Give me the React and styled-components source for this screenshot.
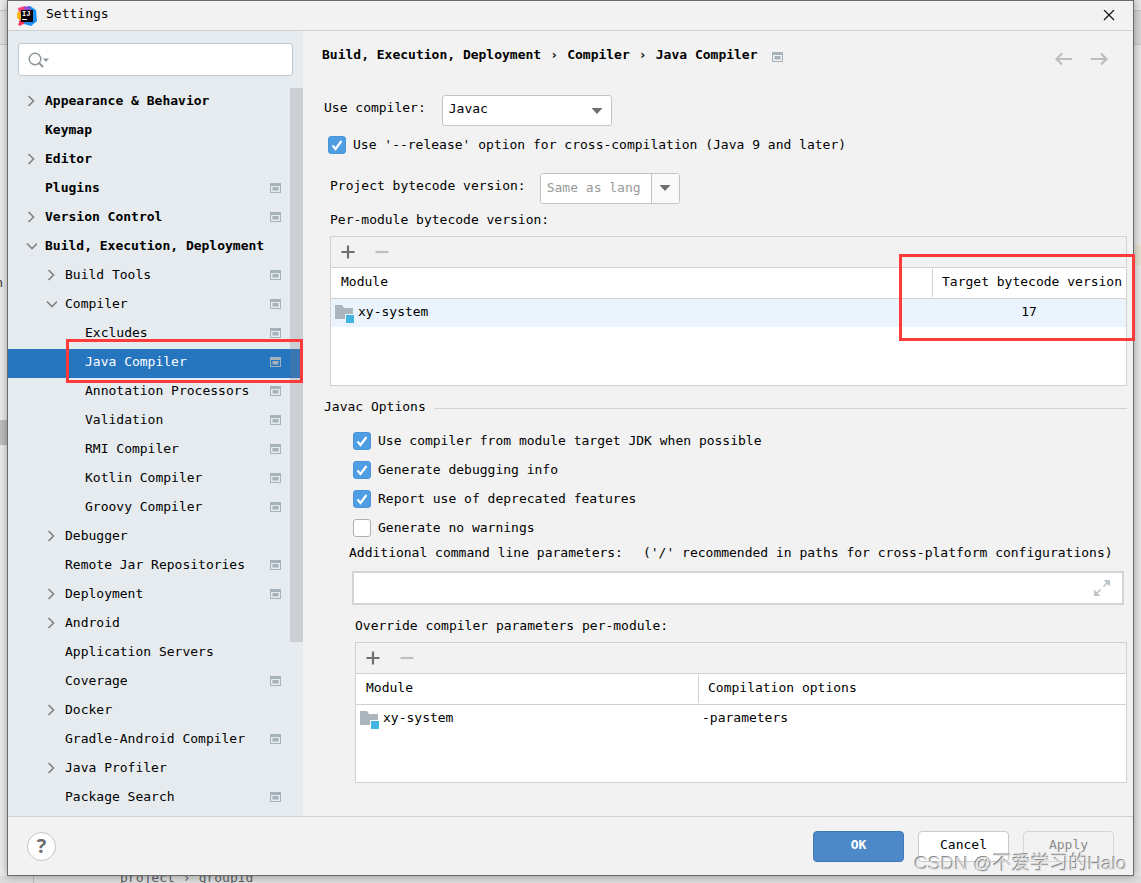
import React, { useState } from 'react';
import styled, { createGlobalStyle } from 'styled-components';

const GlobalStyle = createGlobalStyle`
  * {
    box-sizing: border-box;
  }

  body {
    margin: 0;
    background: #ebebeb;
  }

  body, button, input, select {
    font-family: 'DejaVu Sans Mono', 'Liberation Mono', monospace;
    font-size: 13px;
    line-height: 20px;
    color: #000;
  }
`;

/* ---------- editor behind the dialog ---------- */

const Desktop = styled.div`
  display: grid;
  grid-template-columns: 7px minmax(0, 1fr) 7px;
  grid-template-rows: 1fr 7px;
  min-height: 100vh;
`;

const Edge = styled.div`
  display: flex;
  flex-direction: column;
  overflow: hidden;
  background: ${(props) => props.$color};
`;

const EdgeBlock = styled.div`
  flex: none;
  height: ${(props) => props.$height}px;
  background: ${(props) => props.$color || 'transparent'};
  border-bottom: ${(props) => (props.$line ? '1px solid #c6c6c6' : 'none')};
`;

const EdgeText = styled.div`
  flex: none;
  align-self: flex-end;
  padding-right: 4px;
  color: #333;
`;

const StatusBar = styled.div`
  grid-column: 1 / -1;
  display: flex;
  height: 7px;
  overflow: hidden;
  padding-left: 33px;
  background: #dcdcdc;
`;

const StatusPath = styled.div`
  flex: 1;
  display: flex;
  gap: 8px;
  align-items: flex-end;
  border-left: 1px solid #bcbcbc;
  padding-left: 86px;
  color: #5c6066;
  line-height: 10px;
`;

/* ---------- dialog frame ---------- */

const Dialog = styled.div`
  position: relative;
  display: flex;
  flex-direction: column;
  background: #f2f2f2;
  border: 1px solid #6b6b6b;
  box-shadow: 0 0 8px rgba(0, 0, 0, 0.35);
`;

const TitleBar = styled.header`
  display: flex;
  align-items: center;
  gap: 9px;
  height: 30px;
  padding: 0 18px 0 9px;
  border-bottom: 1px solid #d1d1d1;
`;

const Title = styled.h1`
  flex: 1;
  margin: 0;
  padding-bottom: 4px;
  font-size: 13px;
  font-weight: normal;
`;

const IconButton = styled.button`
  display: flex;
  padding: 0;
  border: none;
  background: none;
  cursor: pointer;
`;

const Content = styled.div`
  flex: 1;
  display: flex;
`;

/* ---------- sidebar ---------- */

const Sidebar = styled.aside`
  flex: none;
  width: 295px;
  background: #e6ebef;
`;

const SearchBox = styled.label`
  display: flex;
  align-items: center;
  gap: 4px;
  height: 33px;
  margin: 12px 10px;
  padding: 0 9px;
  background: #fff;
  border: 1px solid #c4c8cb;
  border-radius: 3px;
`;

const SearchInput = styled.input`
  flex: 1;
  min-width: 0;
  border: none;
  outline: none;
  background: none;
`;

const TreeArea = styled.nav`
  position: relative;
  padding-bottom: 3px;
`;

const Tree = styled.ul`
  margin: 0;
  padding: 0;
  list-style: none;
`;

const TreeRow = styled.li`
  position: relative;
  display: flex;
  align-items: center;
  height: 29px;
  padding: 0 22px 4px ${(props) => 17 + props.$level * 20}px;
  background: ${(props) => (props.$selected ? '#2675bf' : 'transparent')};
  color: ${(props) => (props.$selected ? '#fff' : '#000')};
  font-weight: ${(props) => (props.$level === 0 ? 'bold' : 'normal')};
  white-space: nowrap;
`;

const Twisty = styled.span`
  flex: none;
  display: flex;
  width: 20px;
`;

const TreeLabel = styled.span`
  flex: 1;
`;

const ScrollThumb = styled.div`
  position: absolute;
  top: 0;
  right: 0;
  width: 13px;
  height: 554px;
  background: rgba(120, 120, 125, 0.24);
`;

const Highlight = styled.div`
  position: absolute;
  border: 3px solid #fc3b3a;
  pointer-events: none;
  z-index: 2;
`;

const RowHighlight = styled(Highlight)`
  top: -10px;
  right: 0;
  bottom: -5px;
  left: 58px;
`;

const ColumnHighlight = styled(Highlight)`
  top: 17px;
  right: -9px;
  width: 236px;
  height: 87px;
`;

/* ---------- settings page ---------- */

const Main = styled.main`
  flex: 1;
  min-width: 0;
  padding: 0 6px 33px 19px;
`;

const PageHeader = styled.div`
  display: flex;
  align-items: center;
  justify-content: space-between;
  height: 48px;
  padding-right: 19px;
`;

const Breadcrumb = styled.h2`
  display: flex;
  align-items: center;
  gap: 9px;
  margin: 0;
  font-size: 13px;

  svg {
    margin: 4px 0 0 5px;
  }
`;

const Separator = styled.span`
  width: 8px;
`;

const HistoryButtons = styled.div`
  display: flex;
  gap: 17px;
  padding-top: 8px;
`;

const Field = styled.div`
  display: flex;
  align-items: center;
  height: 30px;
  margin: ${(props) => props.$margin};
`;

const FieldLabel = styled.label`
  padding: 0 ${(props) => props.$gap}px 4px 0;
`;

const SelectBox = styled.div`
  display: grid;
  align-items: center;
  width: 170px;
  background: #fff;
  border: 1px solid #c4c4c4;
  border-radius: 3px;

  select, svg {
    grid-area: 1 / 1;
  }

  select {
    height: 29px;
    padding: 0 6px 2px;
    border: none;
    outline: none;
    background: transparent;
    appearance: none;
  }

  svg {
    justify-self: end;
    margin: 2px 8px 0 0;
    pointer-events: none;
  }
`;

const ComboBox = styled.div`
  display: flex;
  width: 140px;
  height: 31px;
  background: #fff;
  border: 1px solid #c4c4c4;
  border-radius: 3px;
  overflow: hidden;

  input {
    width: 111px;
    padding: 0 6px;
    border: none;
    border-right: 1px solid #c4c4c4;
    outline: none;
  }

  input::placeholder {
    color: #999;
    opacity: 1;
  }

  button {
    flex: 1;
    display: flex;
    align-items: center;
    justify-content: center;
    padding: 0;
    border: none;
    background: #fafafa;
  }
`;

const CheckRow = styled.label`
  display: flex;
  align-items: center;
  gap: 7px;
  height: 29px;
  margin: ${(props) => props.$margin || 0};
`;

const Checkbox = styled.input`
  width: 18px;
  height: 18px;
  margin: 0;
  appearance: none;
  border: 1px solid #b0b0b0;
  border-radius: 3px;
  background: #fff;

  &:checked {
    border-color: #4a94db;
    background: #4f9ee3
      url("data:image/svg+xml,%3Csvg xmlns='http://www.w3.org/2000/svg' viewBox='0 0 16 16'%3E%3Cpath d='M3.5 8.5L6.5 12L12.5 4' fill='none' stroke='white' stroke-width='2.2'/%3E%3C/svg%3E")
      center / 16px no-repeat;
  }
`;

const Caption = styled.div`
  margin: ${(props) => props.$margin};
`;

const SectionTitle = styled.h3`
  display: flex;
  align-items: center;
  gap: 8px;
  margin: 11px 0 9px 2px;
  font-size: 13px;
  font-weight: normal;

  &::after {
    content: '';
    flex: 1;
    height: 1px;
    margin-top: 3px;
    background: #d1d1d1;
  }
`;

const OptionList = styled.div`
  padding-left: 31px;
`;

const ParamLabels = styled.div`
  display: flex;
  gap: 20px;
  padding: 1px 0 0 27px;
  white-space: nowrap;
`;

const ParamBox = styled.div`
  display: flex;
  align-items: center;
  height: 34px;
  margin: 8px 3px 11px 30px;
  padding: 0 12px 0 6px;
  background: #fff;
  border: 2px solid #d4d4d4;

  input {
    flex: 1;
    min-width: 0;
    border: none;
    outline: none;
  }
`;

const TablePanel = styled.section`
  position: relative;
  height: ${(props) => props.$height}px;
  margin: 6px 0 0 ${(props) => props.$indent}px;
  background: #fff;
  border: 1px solid #d1d1d1;
`;

const Toolbar = styled.div`
  display: flex;
  align-items: center;
  gap: 18px;
  height: 31px;
  padding-left: 9px;
  background: #f2f2f2;
  border-bottom: 1px solid #d1d1d1;
`;

const Table = styled.table`
  width: 100%;
  table-layout: fixed;
  border-collapse: separate;
  border-spacing: 0;

  th {
    height: 31px;
    padding: 0;
    border-bottom: 1px solid #d1d1d1;
    font-weight: normal;
    text-align: left;
    white-space: nowrap;
    overflow: hidden;
  }

  td {
    height: 28px;
    padding: 0 4px 3px;
  }
`;

const HeadCell = styled.div`
  height: 28px;
  padding: 3px 0 0 9px;
  border-left: 1px solid ${(props) => (props.$divider ? '#d1d1d1' : 'transparent')};
`;

const BodyRow = styled.tr`
  background: ${(props) => (props.$active ? '#ebf4fc' : '#fff')};
`;

const Column = styled.col`
  width: ${(props) => props.$width};
`;

const ModuleName = styled.div`
  display: flex;
  align-items: center;
  gap: 3px;

  svg {
    margin-top: 4px;
  }
`;

const ValueCell = styled.td`
  text-align: ${(props) => props.$align};
`;

/* ---------- footer ---------- */

const Footer = styled.footer`
  display: flex;
  align-items: center;
  gap: 14px;
  height: 59px;
  padding: 0 19px;
  border-top: 1px solid #d1d1d1;
`;

const HelpButton = styled.button`
  width: 29px;
  height: 29px;
  margin-right: auto;
  padding: 0;
  border: 1px solid #c4c4c4;
  border-radius: 50%;
  background: #fff;
  color: #6e6e6e;
  font-family: 'Open Sans', sans-serif;
  font-size: 20px;
  font-weight: bold;
`;

const DialogButton = styled.button`
  width: 91px;
  height: 31px;
  padding: 0 0 3px;
  border: 1px solid ${(props) => (props.$primary ? '#3f78b8' : '#c9c9c9')};
  border-radius: 4px;
  background: ${(props) => (props.$primary ? '#4d89c9' : '#fff')};
  color: ${(props) => (props.$primary ? '#fff' : '#000')};
  font-weight: ${(props) => (props.$primary ? 'bold' : 'normal')};

  &:disabled {
    border-color: #d6d6d6;
    background: #f2f2f2;
    color: #8c8c8c;
  }
`;

const Watermark = styled.div`
  position: absolute;
  right: 6px;
  bottom: 0;
  font-family: 'Liberation Sans', 'Noto Sans CJK SC', sans-serif;
  font-size: 19px;
  line-height: 22px;
  color: rgba(225, 225, 225, 0.9);
  text-shadow: -1px -1px 0 #8a8a8a;
  white-space: nowrap;
  pointer-events: none;
`;

/* ---------- icons ---------- */

const AppLogo = () => (
  <svg width="20" height="20" viewBox="0 0 20 20">
    <path d="M1 2L8 0L11 5L8 16L4 19L1 19L3 14L0 11L2 7Z" fill="#fc3f78" />
    <path d="M0 7L3 5L5 12L3 14L0 12Z" fill="#fdb60d" />
    <path d="M2 15L6 13L9 17L2 20Z" fill="#fe315d" />
    <path d="M8 2L13 0L19 4L20 15L14 20L7 18L10 8Z" fill="#1a8ff5" />
    <path d="M7 1L12 0L15 5L8 6Z" fill="#8a4fd8" />
    <rect x="4" y="4" width="12" height="12" fill="#0b0307" />
    <text x="5" y="10" fill="#fff" fontFamily="Liberation Mono" fontSize="7" fontWeight="bold">IJ</text>
    <rect x="5" y="13" width="5" height="1" fill="#fff" />
  </svg>
);

const CloseIcon = () => (
  <svg width="12" height="12" viewBox="0 0 12 12" stroke="#111" strokeWidth="1.2">
    <path d="M1 0L11 10M11 0L1 10" />
  </svg>
);

const SearchIcon = () => (
  <svg width="21" height="16" viewBox="0 0 21 16" fill="none" stroke="#8c969c" strokeWidth="1.4">
    <circle cx="7" cy="7" r="5.8" />
    <path d="M11 11L15 15" strokeWidth="2" />
    <path d="M15 6.5H21L18 10Z" fill="#8c969c" stroke="none" />
  </svg>
);

const Chevron = ({ open }) => (
  <svg width="12" height="12" viewBox="0 0 12 12" fill="none" stroke="#808589" strokeWidth="1.7">
    <path d={open ? 'M2 3.5L7 8.5L12 3.5' : 'M3.5 1L8.5 6L3.5 11'} />
  </svg>
);

const ProjectScopeIcon = () => (
  <svg width="11" height="10" viewBox="0 0 11 10">
    <path d="M0 0H11V10H0ZM1 3V9H10V3Z" fill="#a6b2ba" fillRule="evenodd" />
    <rect x="2.5" y="4" width="6" height="3.5" fill="#a6b2ba" />
  </svg>
);

const ArrowIcon = ({ flip }) => (
  <svg width="18" height="14" viewBox="0 0 18 14" fill="none" stroke="#bdbdbd" strokeWidth="2.2">
    <path d={flip ? 'M1 7H16M11 1.5L16.5 7L11 12.5' : 'M17 7H2M7 1.5L1.5 7L7 12.5'} />
  </svg>
);

const DropIcon = () => (
  <svg width="12" height="6" viewBox="0 0 12 6" fill="#6e6e6e">
    <path d="M0.5 0H11.5L6 6Z" />
  </svg>
);

const AddIcon = () => (
  <svg width="16" height="16" viewBox="0 0 16 16" stroke="#6e6e6e" strokeWidth="2.2">
    <path d="M1.5 8H14.5M8 1.5V14.5" />
  </svg>
);

const RemoveIcon = () => (
  <svg width="16" height="16" viewBox="0 0 16 16" stroke="#bfbfbf" strokeWidth="2.2">
    <path d="M1.5 8H14.5" />
  </svg>
);

const ModuleIcon = () => (
  <svg width="20" height="19" viewBox="0 0 20 19">
    <path d="M0 1H7L9 4H18V10H10V15H0Z" fill="#aab5bc" />
    <rect x="11" y="11" width="8" height="8" fill="#40b6e0" />
  </svg>
);

const ExpandIcon = () => (
  <svg width="16" height="16" viewBox="0 0 16 16" fill="#bcc4c9">
    <path d="M9.5 0H16V6.5ZM6.5 16H0V9.5Z" />
    <path d="M14 2L9.5 6.5M2 14L6.5 9.5" stroke="#bcc4c9" strokeWidth="1.6" />
  </svg>
);

/* ---------- data ---------- */

const treeItems = [
  { label: 'Appearance & Behavior', level: 0, state: 'closed' },
  { label: 'Keymap', level: 0 },
  { label: 'Editor', level: 0, state: 'closed' },
  { label: 'Plugins', level: 0, project: true },
  { label: 'Version Control', level: 0, state: 'closed', project: true },
  { label: 'Build, Execution, Deployment', level: 0, state: 'open' },
  { label: 'Build Tools', level: 1, state: 'closed', project: true },
  { label: 'Compiler', level: 1, state: 'open', project: true },
  { label: 'Excludes', level: 2, project: true },
  { label: 'Java Compiler', level: 2, project: true, selected: true },
  { label: 'Annotation Processors', level: 2, project: true },
  { label: 'Validation', level: 2, project: true },
  { label: 'RMI Compiler', level: 2, project: true },
  { label: 'Kotlin Compiler', level: 2, project: true },
  { label: 'Groovy Compiler', level: 2, project: true },
  { label: 'Debugger', level: 1, state: 'closed' },
  { label: 'Remote Jar Repositories', level: 1, project: true },
  { label: 'Deployment', level: 1, state: 'closed', project: true },
  { label: 'Android', level: 1, state: 'closed' },
  { label: 'Application Servers', level: 1 },
  { label: 'Coverage', level: 1, project: true },
  { label: 'Docker', level: 1, state: 'closed' },
  { label: 'Gradle-Android Compiler', level: 1, project: true },
  { label: 'Java Profiler', level: 1, state: 'closed' },
  { label: 'Package Search', level: 1, project: true },
];

const javacOptions = [
  { id: 'targetJdk', label: 'Use compiler from module target JDK when possible' },
  { id: 'debugInfo', label: 'Generate debugging info' },
  { id: 'deprecated', label: 'Report use of deprecated features' },
  { id: 'noWarnings', label: 'Generate no warnings' },
];

const ModuleTable = ({ height, indent, column, width, value, align, active, children }) => (
  <TablePanel $height={height} $indent={indent}>
    <Toolbar>
      <IconButton type="button" aria-label="Add"><AddIcon /></IconButton>
      <IconButton type="button" aria-label="Remove"><RemoveIcon /></IconButton>
    </Toolbar>
    <Table>
      <colgroup>
        <Column />
        <Column $width={width} />
      </colgroup>
      <thead>
        <tr>
          <th><HeadCell>Module</HeadCell></th>
          <th><HeadCell $divider>{column}</HeadCell></th>
        </tr>
      </thead>
      <tbody>
        <BodyRow $active={active}>
          <td><ModuleName><ModuleIcon />xy-system</ModuleName></td>
          <ValueCell $align={align}>{value}</ValueCell>
        </BodyRow>
      </tbody>
    </Table>
    {children}
  </TablePanel>
);

const App = () => {
  const [query, setQuery] = useState('');
  const [params, setParams] = useState('');
  const [options, setOptions] = useState({
    release: true,
    targetJdk: true,
    debugInfo: true,
    deprecated: true,
    noWarnings: false,
  });

  const toggle = (id) => setOptions({ ...options, [id]: !options[id] });

  return (
    <Desktop>
      <GlobalStyle />
      <Edge $color="#ececec">
        <EdgeBlock $height={11} $line />
        <EdgeBlock $height={34} $color="#e2e2e2" $line />
        <EdgeBlock $height={228} />
        <EdgeText>n</EdgeText>
        <EdgeBlock $height={127} />
        <EdgeBlock $height={25} $color="#bdbdbd" />
      </Edge>

      <Dialog>
        <TitleBar>
          <AppLogo />
          <Title>Settings</Title>
          <IconButton type="button" aria-label="Close"><CloseIcon /></IconButton>
        </TitleBar>

        <Content>
          <Sidebar>
            <SearchBox>
              <SearchIcon />
              <SearchInput
                type="text"
                aria-label="Search settings"
                value={query}
                onChange={(e) => setQuery(e.target.value)}
              />
            </SearchBox>
            <TreeArea>
              <Tree>
                {treeItems.map((item) => (
                  <TreeRow key={item.label} $level={item.level} $selected={item.selected}>
                    <Twisty>{item.state && <Chevron open={item.state === 'open'} />}</Twisty>
                    <TreeLabel>{item.label}</TreeLabel>
                    {item.project && <ProjectScopeIcon />}
                    {item.selected && <RowHighlight />}
                  </TreeRow>
                ))}
              </Tree>
              <ScrollThumb />
            </TreeArea>
          </Sidebar>

          <Main>
            <PageHeader>
              <Breadcrumb>
                <span>Build, Execution, Deployment</span>
                <Separator>›</Separator>
                <span>Compiler</span>
                <Separator>›</Separator>
                <span>Java Compiler</span>
                <ProjectScopeIcon />
              </Breadcrumb>
              <HistoryButtons>
                <IconButton type="button" aria-label="Back"><ArrowIcon /></IconButton>
                <IconButton type="button" aria-label="Forward"><ArrowIcon flip /></IconButton>
              </HistoryButtons>
            </PageHeader>

            <Field $margin="16px 0 0 2px">
              <FieldLabel htmlFor="compiler" $gap={16}>Use compiler:</FieldLabel>
              <SelectBox>
                <select id="compiler" defaultValue="Javac">
                  <option>Javac</option>
                  <option>Eclipse</option>
                </select>
                <DropIcon />
              </SelectBox>
            </Field>

            <CheckRow $margin="5px 0 0 6px">
              <Checkbox type="checkbox" checked={options.release} onChange={() => toggle('release')} />
              Use '--release' option for cross-compilation (Java 9 and later)
            </CheckRow>

            <Field $margin="14px 0 0 8px">
              <FieldLabel htmlFor="bytecode" $gap={14}>Project bytecode version:</FieldLabel>
              <ComboBox>
                <input id="bytecode" type="text" placeholder="Same as lang" />
                <button type="button" aria-label="Show versions"><DropIcon /></button>
              </ComboBox>
            </Field>

            <Caption $margin="7px 0 0 8px">Per-module bytecode version:</Caption>
            <ModuleTable
              height={150}
              indent={8}
              column="Target bytecode version"
              width="194px"
              value="17"
              align="center"
              active
            >
              <ColumnHighlight />
            </ModuleTable>

            <SectionTitle>Javac Options</SectionTitle>
            <OptionList>
              {javacOptions.map(({ id, label }) => (
                <CheckRow key={id}>
                  <Checkbox type="checkbox" checked={options[id]} onChange={() => toggle(id)} />
                  {label}
                </CheckRow>
              ))}
            </OptionList>

            <ParamLabels>
              <label htmlFor="params">Additional command line parameters:</label>
              <span>('/' recommended in paths for cross-platform configurations)</span>
            </ParamLabels>
            <ParamBox>
              <input id="params" type="text" value={params} onChange={(e) => setParams(e.target.value)} />
              <IconButton type="button" aria-label="Expand"><ExpandIcon /></IconButton>
            </ParamBox>

            <Caption $margin="0 0 0 33px">Override compiler parameters per-module:</Caption>
            <ModuleTable
              height={141}
              indent={33}
              column="Compilation options"
              width="428px"
              value="-parameters"
              align="left"
            />
          </Main>
        </Content>

        <Footer>
          <HelpButton type="button" aria-label="Help">?</HelpButton>
          <DialogButton type="button" $primary>OK</DialogButton>
          <DialogButton type="button">Cancel</DialogButton>
          <DialogButton type="button" disabled>Apply</DialogButton>
        </Footer>
        <Watermark>CSDN @不爱学习的Halo</Watermark>
      </Dialog>

      <Edge $color="#e6e6e6">
        <EdgeBlock $height={11} $line />
        <EdgeBlock $height={34} $color="#d6d6d6" $line />
        <EdgeBlock $height={200} />
        <EdgeBlock $height={20} $color="#e3e0d0" />
      </Edge>

      <StatusBar>
        <StatusPath>
          <span>project</span>
          <span>›</span>
          <span>groupId</span>
        </StatusPath>
      </StatusBar>
    </Desktop>
  );
};

export default App;
